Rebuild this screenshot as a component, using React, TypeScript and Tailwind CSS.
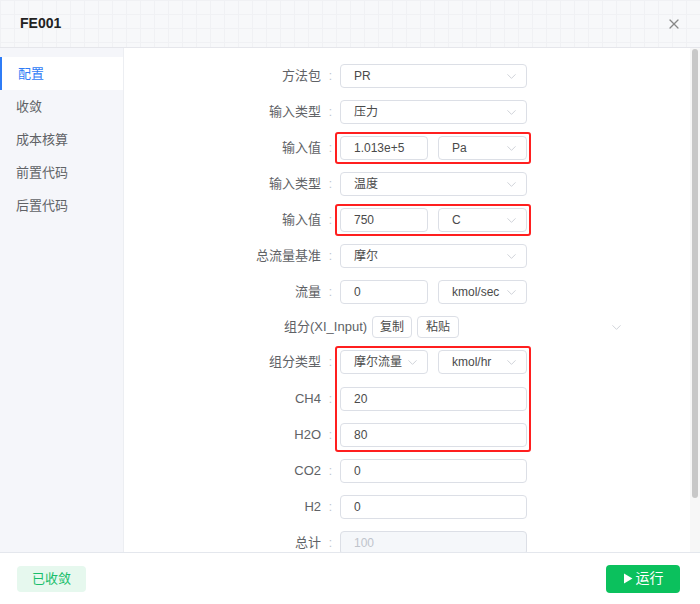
import { ChevronDown, X } from "lucide-react";

const font = { fontFamily: '"Liberation Sans", "Noto Sans CJK SC", sans-serif' };

function Chevron() {
  return <ChevronDown className="w-[15px] h-[15px] text-[#c0c4cc]" strokeWidth={1.2} />;
}

function Select({ value, className = "" }: { value: string; className?: string }) {
  return (
    <div
      className={`h-6 border border-[#dcdfe6] rounded-[4px] bg-white flex items-center justify-between pl-[13px] pr-[7px] text-[12px] text-[#4a4a4a] ${className}`}
    >
      <span>{value}</span>
      <Chevron />
    </div>
  );
}

function Input({ value, className = "", disabled = false }: { value: string; className?: string; disabled?: boolean }) {
  return (
    <div
      className={`h-6 border border-[#dcdfe6] rounded-[4px] flex items-center pl-[13px] text-[12px] ${
        disabled ? "bg-[#f5f7fa] text-[#c0c4cc]" : "bg-white text-[#4a4a4a]"
      } ${className}`}
    >
      {value}
    </div>
  );
}

function Row({ label, children, className = "" }: { label: string; children: React.ReactNode; className?: string }) {
  return (
    <div className={`flex items-center h-6 ${className}`}>
      <div className="w-[197px] text-right text-[13px] text-[#606266]">{label}</div>
      <div className="w-[19px] text-center text-[12px] text-[#c0c4cc]">:</div>
      <div className="w-[187px]">{children}</div>
    </div>
  );
}

function Highlight({ children }: { children: React.ReactNode }) {
  return (
    <div className="relative">
      <div className="absolute -top-[4px] -bottom-[4px] -left-[5px] -right-[4px] border-2 border-[#ff1f1f] rounded-[3px] pointer-events-none" />
      {children}
    </div>
  );
}

function Split({ left, right, leftSelect = false }: { left: string; right: string; leftSelect?: boolean }) {
  return (
    <div className="flex gap-[10px]">
      {leftSelect ? <Select value={left} className="w-[88px]" /> : <Input value={left} className="w-[88px]" />}
      <Select value={right} className="w-[89px]" />
    </div>
  );
}

const menu = ["配置", "收敛", "成本核算", "前置代码", "后置代码"];

export default function App() {
  return (
    <div className="w-[700px] h-[604px] bg-white flex flex-col overflow-hidden" style={font}>
      {/* 헤더 */}
      <div className="h-[48px] flex items-center justify-between px-5 border-b border-[#e5e6eb] bg-[#f7f8fa] bg-[linear-gradient(#f0f1f4_1px,transparent_1px),linear-gradient(90deg,#f0f1f4_1px,transparent_1px)] bg-[size:14px_14px]">
        <div className="text-[14px] font-bold text-[#222]">FE001</div>
        <X className="w-[16px] h-[16px] text-[#888] mr-[-2px]" strokeWidth={1.8} />
      </div>

      <div className="flex flex-1 min-h-0">
        {/* 사이드 메뉴 */}
        <div className="w-[124px] bg-[#f5f6fa] pt-[9px] border-r border-[#eceef2]">
          {menu.map((m, i) => (
            <div
              key={m}
              className={`h-[33px] flex items-center pl-[16px] text-[13px] ${
                i === 0 ? "bg-white text-[#2f7cf6] border-l-2 border-[#2f7cf6] pl-[14px]" : "text-[#606266]"
              }`}
            >
              {m}
            </div>
          ))}
        </div>

        {/* 폼 */}
        <div className="flex-1 overflow-hidden pt-[16px] flex flex-col gap-3">
          <Row label="方法包">
            <Select value="PR" />
          </Row>
          <Row label="输入类型">
            <Select value="压力" />
          </Row>
          <Row label="输入值">
            <Highlight>
              <Split left="1.013e+5" right="Pa" />
            </Highlight>
          </Row>
          <Row label="输入类型">
            <Select value="温度" />
          </Row>
          <Row label="输入值">
            <Highlight>
              <Split left="750" right="C" />
            </Highlight>
          </Row>
          <Row label="总流量基准">
            <Select value="摩尔" />
          </Row>
          <Row label="流量">
            <Split left="0" right="kmol/sec" />
          </Row>

          <div className="flex items-center h-6 pl-[160px]">
            <span className="text-[13px] text-[#606266]">组分(XI_Input)</span>
            <button className="ml-[5px] h-[22px] px-[7px] border border-[#dcdfe6] rounded-[4px] text-[12px] text-[#4a4a4a] bg-white">
              复制
            </button>
            <button className="ml-[5px] h-[22px] px-[8px] border border-[#dcdfe6] rounded-[4px] text-[12px] text-[#4a4a4a] bg-white">
              粘贴
            </button>
            <div className="ml-[150px]">
              <Chevron />
            </div>
          </div>

          <div className="relative flex flex-col gap-3">
            <div className="absolute -top-[4px] -bottom-[5px] left-[211px] w-[196px] border-2 border-[#ff1f1f] rounded-[3px] pointer-events-none" />
            <Row label="组分类型">
              <Split left="摩尔流量" right="kmol/hr" leftSelect />
            </Row>
            <Row label="CH4" className="mt-[1px]">
              <Input value="20" />
            </Row>
            <Row label="H2O">
              <Input value="80" />
            </Row>
          </div>
          <Row label="CO2">
            <Input value="0" />
          </Row>
          <Row label="H2">
            <Input value="0" />
          </Row>
          <Row label="总计">
            <Input value="100" disabled />
          </Row>
        </div>

        {/* 스크롤바 */}
        <div className="w-[10px] pt-[1px] pb-[1px] flex flex-col bg-[#f7f7f7]">
          <div className="h-[449px] mx-[2px] w-[6px] rounded-[3px] bg-[#c8c8c8]" />
        </div>
      </div>

      {/* 푸터 */}
      <div className="h-[52px] border-t border-[#e4e7ed] flex items-center justify-between pl-[17px] pr-[20px] shrink-0">
        <div className="h-[26px] w-[69px] rounded-[4px] bg-[#e6f8ee] text-[#19be6b] text-[13px] flex items-center justify-center">
          已收敛
        </div>
        <button className="h-[28px] w-[74px] rounded-[4px] bg-[#0bc15d] text-white text-[14px] flex items-center justify-center gap-[3px]">
          <svg width="10" height="11" viewBox="0 0 10 11">
            <path d="M1 0.5 L9.5 5.5 L1 10.5 Z" fill="white" />
          </svg>
          运行
        </button>
      </div>
    </div>
  );
}
